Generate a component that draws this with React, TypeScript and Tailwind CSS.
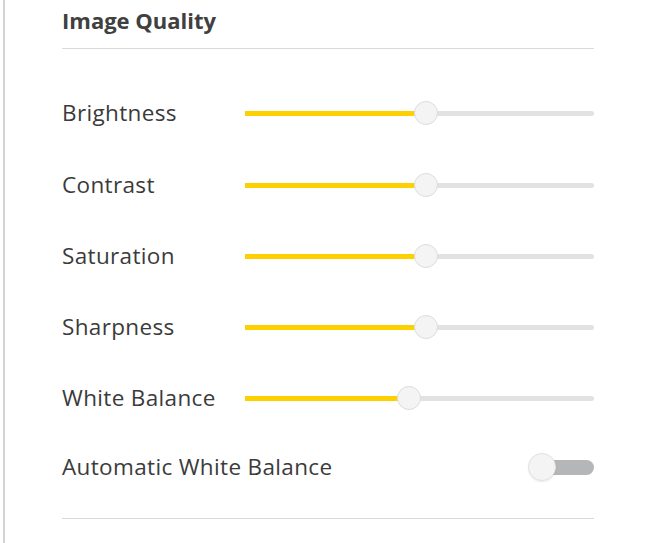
const rows = [
  { label: "Brightness", value: 52, h: "h-[71px]" },
  { label: "Contrast", value: 52, h: "h-[73px]" },
  { label: "Saturation", value: 52, h: "h-[69px]" },
  { label: "Sharpness", value: 52, h: "h-[73px]" },
  { label: "White Balance", value: 47, h: "h-[70px]" },
];

const Slider = ({ value }: { value: number }) => (
  <div className="relative h-[24px] flex-1">
    <div className="absolute inset-x-0 top-[10px] h-[5px] rounded-full bg-[#e2e2e2]" />
    <div
      className="absolute left-0 top-[10px] h-[5px] bg-[#fdd000]"
      style={{ width: `${value}%` }}
    />
    <div
      className="absolute top-0 h-[24px] w-[24px] -translate-x-1/2 rounded-full border border-[#dcdcdc] bg-[#f4f4f4]"
      style={{ left: `${value}%` }}
    />
  </div>
);

const Toggle = () => (
  <div className="relative h-[28px] w-[66px]">
    <div className="absolute right-0 top-[7px] h-[15px] w-[52px] rounded-full bg-[#b4b6b7]" />
    <div className="absolute left-0 top-0 h-[28px] w-[28px] rounded-full border border-[#e2e2e2] bg-[#f4f4f4] shadow-[0_1px_2px_rgba(0,0,0,0.08)]" />
  </div>
);

export default function App() {
  return (
    <div className="min-h-[543px] w-[650px] bg-white font-['Open_Sans',sans-serif] text-[#3b3b3b]">
      <div className="ml-[3px] min-h-[543px] border-l-2 border-[#d4d4d4] pl-[57px] pr-[56px]">
        <div className="flex h-[49px] items-center border-b border-[#d9d9d9] pb-[8px]">
          <h2 className="text-[22px] font-bold tracking-[0px] text-[#404040]">Image Quality</h2>
        </div>
        <div className="pt-[28px] tracking-[0.35px]">
          {rows.map((r) => (
            <div key={r.label} className={`flex items-center ${r.h}`}>
              <div className="w-[183px] text-[22.5px]">{r.label}</div>
              <Slider value={r.value} />
            </div>
          ))}
          <div className="flex h-[68px] items-center justify-between">
            <div className="text-[22.5px]">Automatic White Balance</div>
            <Toggle />
          </div>
        </div>
        <div className="mt-[17px] border-b border-[#d9d9d9]" />
      </div>
    </div>
  );
}
